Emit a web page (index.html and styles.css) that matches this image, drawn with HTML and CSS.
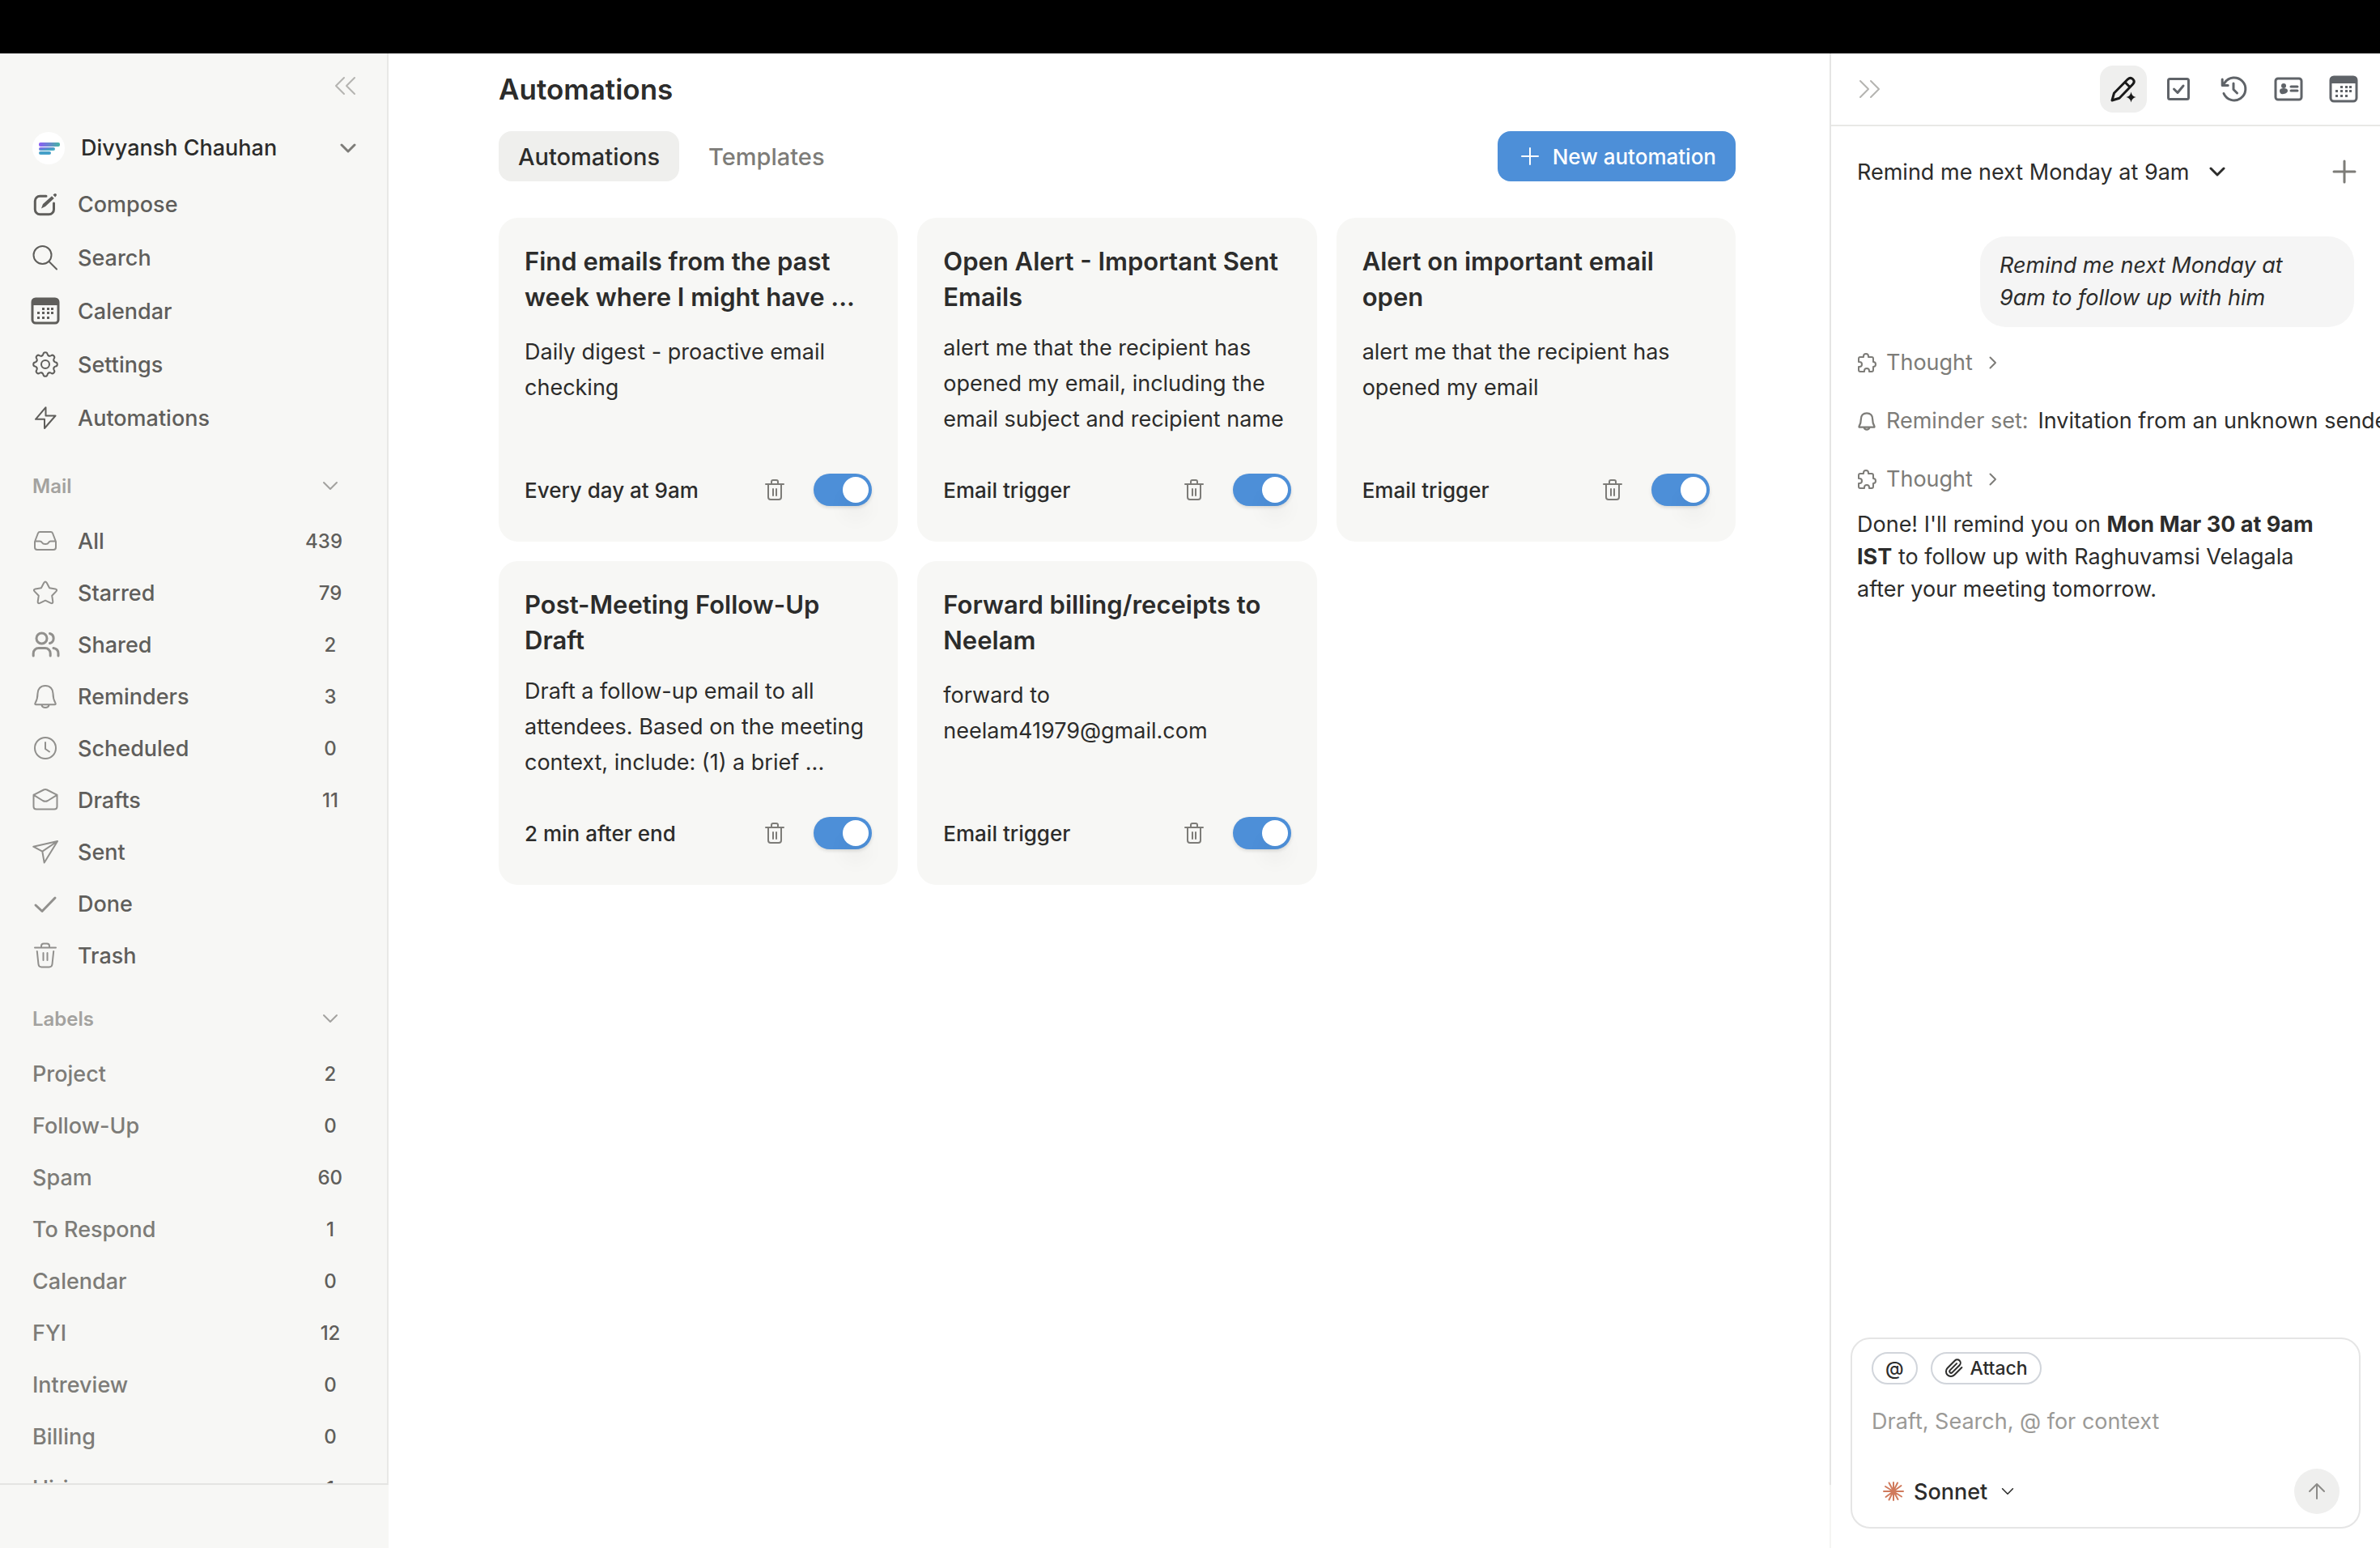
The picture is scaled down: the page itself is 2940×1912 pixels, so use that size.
FILE: index.html
```html
<!DOCTYPE html>
<html lang="en">
<head>
    <meta charset="UTF-8">
    <meta name="viewport" content="width=device-width, initial-scale=1">
    <title>Automations</title>
    <link rel="stylesheet" href="styles.css">
</head>
<body>

<!-- shared icons -->
<svg class="sprite" aria-hidden="true">
    <symbol id="i-calendar" viewBox="0 0 36 36">
        <rect x="2" y="3" width="32" height="30" rx="4" fill="none" stroke="currentColor" stroke-width="3"/>
        <path d="M2 11V6q0-4 4-4h24q4 0 4 4v5z" fill="currentColor"/>
        <g fill="currentColor">
            <path d="M14 14h3v3h-3zM20 14h3v3h-3zM25 14h3v3h-3zM8 19h3v3H8zM14 19h3v3h-3zM20 19h3v3h-3zM25 19h3v3h-3zM8 25h3v3H8zM14 25h3v3h-3zM20 25h3v3h-3z"/>
        </g>
    </symbol>
    <symbol id="i-bell" viewBox="0 0 32 32">
        <path d="M16 3c-6 0-9.500 4-9.500 9.500 0 6-1 8.500-3 12q-.8 1.800 1 1.800h23q1.800 0 1-1.800c-2-3.500-3-6-3-12C25.500 7 22 3 16 3zM11.500 27c1 4 8 4 9 0"/>
    </symbol>
    <symbol id="i-trash" viewBox="0 0 24 26">
        <path d="M1 6h22M8 6V3q0-2 2-2h4q2 0 2 2v3M4 6v16q0 3 3 3h10q3 0 3-3V6M10 12v8M14 12v8"/>
    </symbol>
    <symbol id="i-down" viewBox="0 0 20 12">
        <path d="M2 2l8 8 8-8"/>
    </symbol>
    <symbol id="i-puzzle" viewBox="0 0 24 24">
        <path d="M2 8V7q0-2 2-2h4V4a3 3 0 0 1 6 0v1h4q2 0 2 2v4a3 3 0 0 1 0 6v4q0 2-2 2h-3v-1a3 3 0 0 0-6 0v1H4q-2 0-2-2v-4h1a3 3 0 0 0 0-6H2z"/>
    </symbol>
    <symbol id="i-right" viewBox="0 0 10 16">
        <path d="M1.500 1.500L8 8l-6.500 6.500"/>
    </symbol>
</svg>

<div class="topbar"></div>
<div class="app">

    <aside class="sidebar">
        <div class="sidebar-body">
            <div class="collapse-row">
                <button class="icon-btn" aria-label="Collapse sidebar">
                    <svg class="line light" width="28" height="24" viewBox="0 0 28 24"><path d="M13 2L3 12l10 10M26 2L16 12l10 10"/></svg>
                </button>
            </div>
            <button class="account">
                <svg class="avatar" viewBox="0 0 40 40">
                    <defs>
                        <linearGradient id="brand" x1="0" y1="0" x2="1" y2="1">
                            <stop offset="0" stop-color="#8b5cf6"/>
                            <stop offset=".6" stop-color="#4a9fc4"/>
                            <stop offset="1" stop-color="#45b5c4"/>
                        </linearGradient>
                        <linearGradient id="brandTop" x1="0" y1="0" x2="1" y2="0">
                            <stop offset="0" stop-color="#8b5cf6"/>
                            <stop offset="1" stop-color="#45b5a4"/>
                        </linearGradient>
                    </defs>
                    <circle cx="20" cy="20" r="20" fill="#fff"/>
                    <rect x="8" y="13" width="26" height="5" rx="2" fill="url(#brandTop)"/>
                    <rect x="8" y="19" width="20" height="4" rx="2" fill="url(#brand)"/>
                    <rect x="8" y="24" width="15" height="4" rx="2" fill="#459fc8"/>
                </svg>
                <span class="account-name">Divyansh Chauhan</span>
                <svg class="line" width="20" height="12"><use href="#i-down"/></svg>
            </button>

            <nav class="nav">
                <a href="#"><svg class="ico" viewBox="0 0 32 32"><path class="thick" d="M17 6.200H9.300a6 6 0 0 0-6 6v10.500a6 6 0 0 0 6 6h11.200a6 6 0 0 0 6-6V15"/><path class="solid" d="M11 21.500l2-5.500L24 6.200l2.800 2.800L16 19zM25.500 4.800l1.700-1.500q1.200-.8 2.200.2t.2 2.200L28.200 7.500z"/></svg>Compose</a>
                <a href="#"><svg class="ico" viewBox="0 0 32 32"><circle cx="12.500" cy="13" r="11"/><path d="M20.500 21l9.500 9.500"/></svg>Search</a>
                <a href="#"><svg class="ico-lg"><use href="#i-calendar"/></svg>Calendar</a>
                <a href="#"><svg class="ico" viewBox="0 0 32 32">
                    <g transform="translate(16 16)">
                        <path id="cog" d="M-4.300-10.500C-3.100-11-2.700-11.600-2.600-12.600-2.400-14.200-1.400-14.800 0-14.800S2.400-14.200 2.600-12.600C2.700-11.600 3.100-11 4.300-10.500"/>
                        <use href="#cog" transform="rotate(45)"/><use href="#cog" transform="rotate(90)"/>
                        <use href="#cog" transform="rotate(135)"/><use href="#cog" transform="rotate(180)"/>
                        <use href="#cog" transform="rotate(225)"/><use href="#cog" transform="rotate(270)"/>
                        <use href="#cog" transform="rotate(315)"/>
                        <circle r="5"/>
                    </g></svg>Settings</a>
                <a href="#"><svg class="ico" viewBox="0 0 32 32"><path d="M16.500 3.200L4 17.800h11L15 29l13.500-15.500h-12z"/></svg>Automations</a>
            </nav>

            <button class="group">Mail <svg class="line" width="20" height="12"><use href="#i-down"/></svg></button>
            <nav class="list mail">
                <a href="#"><svg class="ico" viewBox="0 0 32 32"><path d="M3 17L7 6.500Q7.600 5 9.300 5h13.400q1.700 0 2.300 1.500L29 17v7q0 3-3 3H6q-3 0-3-3zM3.500 16.500H9q2 0 3 1.700T16 20t4-1.800 3-1.700h5.500"/></svg>All <span class="count">439</span></a>
                <a href="#"><svg class="ico" viewBox="0 0 32 32"><path d="M14.300 3.800q1.700-2.400 3.400 0l3.400 6.500 7.300 1.100q2.900.6 1 3l-5.200 5.300 1.100 7.300q.2 2.900-2.600 1.900L16 25.700l-6.700 3.200q-2.800 1-2.600-1.900l1.100-7.300-5.200-5.300q-1.900-2.400 1-3l7.300-1.100z"/></svg>Starred <span class="count">79</span></a>
                <a href="#"><svg class="ico" viewBox="0 0 32 32"><g class="thick"><circle cx="11.500" cy="8.500" r="6.500"/><path d="M1.200 30v-3a6.500 6.500 0 0 1 6.500-6.500h8a6.500 6.500 0 0 1 6.500 6.500v3M21.500 2.500a6.200 6.200 0 0 1 0 12M26 20.500q6 1 6 6.500v3"/></g></svg>Shared <span class="count">2</span></a>
                <a href="#"><svg class="ico"><use href="#i-bell"/></svg>Reminders <span class="count">3</span></a>
                <a href="#"><svg class="ico" viewBox="0 0 32 32"><circle cx="16" cy="16" r="13"/><path d="M16 9v8l5 3.500"/></svg>Scheduled <span class="count">0</span></a>
                <a href="#"><svg class="ico" viewBox="0 0 32 32"><path d="M1.500 9.800L14 3.500q2-1 4 0l12.500 6.300V24q0 3.500-3.500 3.500H5Q1.500 27.500 1.500 24zM1.500 9.800L13 17q3 1.500 6 0l11.500-7.200"/></svg>Drafts <span class="count">11</span></a>
                <a href="#"><svg class="ico" viewBox="0 0 32 32"><path d="M31 3L1.200 9.700l11.100 5.900 2.400 13.900zL12.300 15.600"/></svg>Sent</a>
                <a href="#"><svg class="ico" viewBox="0 0 32 32"><path class="thick" d="M4 18l8 7.500L28 9"/></svg>Done</a>
                <a href="#"><svg class="ico" viewBox="0 0 32 32"><path d="M3 6.500h26M11 6.500v-2q0-3 3-3h4q3 0 3 3v2M5.800 11l1.700 16q.4 3.500 3.800 3.500h9.400q3.400 0 3.800-3.500l1.700-16M13.500 13v9M18.500 13v9"/></svg>Trash</a>
            </nav>

            <button class="group">Labels <svg class="line" width="20" height="12"><use href="#i-down"/></svg></button>
            <nav class="list labels">
                <a href="#">Project <span class="count">2</span></a>
                <a href="#">Follow-Up <span class="count">0</span></a>
                <a href="#">Spam <span class="count">60</span></a>
                <a href="#">To Respond <span class="count">1</span></a>
                <a href="#">Calendar <span class="count">0</span></a>
                <a href="#">FYI <span class="count">12</span></a>
                <a href="#">Intreview <span class="count">0</span></a>
                <a href="#">Billing <span class="count">0</span></a>
                <a href="#">Hiring <span class="count">1</span></a>
            </nav>
        </div>
        <div class="sidebar-foot"></div>
    </aside>

    <main class="main">
        <h1>Automations</h1>
        <div class="toolbar">
            <button class="tab active">Automations</button>
            <button class="tab">Templates</button>
            <button class="new-btn">
                <svg class="line" width="24" height="24" viewBox="0 0 24 24"><path d="M12 2v20M2 12h20"/></svg>
                New automation
            </button>
        </div>

        <div class="cards">
            <article class="card">
                <h2>Find emails from the past week where I might have ...</h2>
                <p>Daily digest - proactive email checking</p>
                <div class="card-foot">
                    <span>Every day at 9am</span>
                    <button class="icon-btn" aria-label="Delete"><svg class="line" width="24" height="26"><use href="#i-trash"/></svg></button>
                    <input type="checkbox" class="switch" aria-label="Enabled" checked>
                </div>
            </article>
            <article class="card">
                <h2>Open Alert - Important Sent Emails</h2>
                <p class="long">alert me that the recipient has opened my email, including the email subject and recipient name</p>
                <div class="card-foot">
                    <span>Email trigger</span>
                    <button class="icon-btn" aria-label="Delete"><svg class="line" width="24" height="26"><use href="#i-trash"/></svg></button>
                    <input type="checkbox" class="switch" aria-label="Enabled" checked>
                </div>
            </article>
            <article class="card">
                <h2>Alert on important email open</h2>
                <p>alert me that the recipient has opened my email</p>
                <div class="card-foot">
                    <span>Email trigger</span>
                    <button class="icon-btn" aria-label="Delete"><svg class="line" width="24" height="26"><use href="#i-trash"/></svg></button>
                    <input type="checkbox" class="switch" aria-label="Enabled" checked>
                </div>
            </article>
            <article class="card">
                <h2>Post-Meeting Follow-Up Draft</h2>
                <p class="long">Draft a follow-up email to all attendees. Based on the meeting context, include: (1) a brief ...</p>
                <div class="card-foot">
                    <span>2 min after end</span>
                    <button class="icon-btn" aria-label="Delete"><svg class="line" width="24" height="26"><use href="#i-trash"/></svg></button>
                    <input type="checkbox" class="switch" aria-label="Enabled" checked>
                </div>
            </article>
            <article class="card">
                <h2>Forward billing/receipts to Neelam</h2>
                <p>forward to neelam41979@gmail.com</p>
                <div class="card-foot">
                    <span>Email trigger</span>
                    <button class="icon-btn" aria-label="Delete"><svg class="line" width="24" height="26"><use href="#i-trash"/></svg></button>
                    <input type="checkbox" class="switch" aria-label="Enabled" checked>
                </div>
            </article>
        </div>
    </main>

    <aside class="panel">
        <header class="panel-head">
            <button class="icon-btn" aria-label="Close panel">
                <svg class="line light" width="28" height="24" viewBox="0 0 28 24"><path d="M2 2l10 10L2 22M15 2l10 10-10 10"/></svg>
            </button>
            <div class="panel-tools">
                <button class="tool active" aria-label="Assistant"><svg viewBox="0 0 32 32"><path d="M2 30l2.500-9L21.500 3.800q3.200-3 6.200 0t0 6.200L11 27.200zM18 7.500l6.200 6.200"/><path class="solid" d="M25.500 19.500q1 5.500 6 6.500-5 1-6 6.500-1-5.500-6-6.500 5-1 6-6.500z"/></svg></button>
                <button class="tool" aria-label="Tasks"><svg viewBox="0 0 32 32"><rect x="3.500" y="3.500" width="25" height="25" rx="2"/><path d="M10.500 16l4.500 4.500 7-8.500"/></svg></button>
                <button class="tool" aria-label="History"><svg viewBox="0 0 32 32"><path d="M4 21.500A14 14 0 1 0 5.200 8.200L2.500 11M2.200 4v7.500h7M16 9v7.500l4.500 4.500"/></svg></button>
                <button class="tool" aria-label="Contact"><svg viewBox="0 0 32 32"><rect x="0" y="3" width="32" height="26" rx="3"/><circle class="solid" cx="10" cy="12" r="3"/><path class="solid" d="M5 18q0-3 5-3t5 3-5 4-5-4z"/><path d="M19 13h8M19 18h8"/></svg></button>
                <button class="tool" aria-label="Calendar"><svg class="cal"><use href="#i-calendar"/></svg></button>
            </div>
        </header>

        <div class="thread-head">
            <label class="pick">
                <select aria-label="Conversation"><option>Remind me next Monday at 9am</option></select>
                <svg class="line" width="20" height="12"><use href="#i-down"/></svg>
            </label>
            <button class="icon-btn" aria-label="New conversation">
                <svg class="line" width="28" height="28" viewBox="0 0 28 28"><path d="M14 1v26M1 14h26"/></svg>
            </button>
        </div>

        <div class="thread">
            <p class="bubble">Remind me next Monday at 9am to follow up with him</p>
            <button class="step"><svg class="line" width="24" height="24"><use href="#i-puzzle"/></svg>Thought <svg class="line chev" width="10" height="16"><use href="#i-right"/></svg></button>
            <p class="step"><svg class="line bell" width="24" height="24"><use href="#i-bell"/></svg>Reminder set: <span>Invitation from an unknown sender</span></p>
            <button class="step"><svg class="line" width="24" height="24"><use href="#i-puzzle"/></svg>Thought <svg class="line chev" width="10" height="16"><use href="#i-right"/></svg></button>
            <p class="reply">Done! I'll remind you on <b>Mon Mar 30 at 9am IST</b> to follow up with Raghuvamsi Velagala after your meeting tomorrow.</p>
        </div>

        <form class="composer">
            <div class="chips">
                <button type="button" class="chip">@</button>
                <button type="button" class="chip">
                    <svg class="line" width="24" height="24" viewBox="0 0 24 24"><path d="M21.400 11l-9.200 9.200a6 6 0 0 1-8.500-8.500l9.200-9.200a4 4 0 0 1 5.700 5.700l-9.200 9.200a2 2 0 0 1-2.800-2.800l8.500-8.500"/></svg>
                    Attach
                </button>
            </div>
            <textarea rows="1" placeholder="Draft, Search, @ for context" aria-label="Message"></textarea>
            <div class="composer-foot">
                <label class="pick model">
                    <svg width="26" height="26" viewBox="-13 -13 26 26" stroke="#d07a5c" stroke-width="2" stroke-linecap="round"><path d="M0-11V11M-12 0H12M-5.500-10.500L5.500 10M5-10.500L-5.500 10.500M-10-6L10 6.500M9.500-7L-9.500 7"/></svg>
                    <select aria-label="Model"><option>Sonnet</option></select>
                    <svg class="line" width="16" height="10"><use href="#i-down"/></svg>
                </label>
                <button type="button" class="send" aria-label="Send">
                    <svg class="line" width="20" height="20" viewBox="0 0 20 20"><path d="M10 19V1M1 10l9-9 9 9"/></svg>
                </button>
            </div>
        </form>
    </aside>
</div>

</body>
</html>
```
FILE: styles.css
```css
* {
    box-sizing: border-box;
}
body {
    margin: 0;
    height: 100vh;
    display: flex;
    flex-direction: column;
    overflow: hidden;
    font-family: Inter, "Liberation Sans", sans-serif;
    font-size: 27px;
    color: #2c2c2b;
    background: #fff;
}
h1, h2, p {
    margin: 0;
}
a {
    color: inherit;
    text-decoration: none;
}
button, select, textarea {
    font: inherit;
    color: inherit;
    background: none;
    border: 0;
    padding: 0;
    margin: 0;
}
svg {
    flex: none;
    overflow: visible;
}
.sprite {
    display: none;
}
.line {
    fill: none;
    stroke: currentColor;
    stroke-width: 2;
    stroke-linecap: round;
    stroke-linejoin: round;
}
.light {
    color: #b5b4b1;
}
.solid {
    fill: currentColor;
    stroke: none;
}
.icon-btn {
    display: flex;
}

.topbar {
    height: 66px;
    flex: none;
    background: #000;
}
.app {
    flex: 1;
    min-height: 0;
    display: flex;
}

/* sidebar */
.sidebar {
    width: 480px;
    flex: none;
    display: flex;
    flex-direction: column;
    background: #f7f7f5;
    font-weight: 500;
    color: #5f5e5b;
}
.sidebar-body {
    flex: 1;
    min-height: 0;
    overflow: hidden;
    border-right: 2px solid #e8e8e6;
    border-bottom: 2px solid #e4e4e2;
}
.sidebar-foot {
    height: 78px;
    flex: none;
}
.collapse-row {
    height: 80px;
    padding: 0 38px;
    display: flex;
    align-items: center;
    justify-content: flex-end;
}
.account {
    width: 100%;
    height: 73px;
    padding: 0 38px 0 40px;
    display: flex;
    align-items: center;
    gap: 20px;
    color: #7d7c78;
}
.account .line {
    stroke-width: 3;
}
.avatar {
    width: 40px;
    height: 40px;
}
.account-name {
    flex: 1;
    text-align: left;
    color: #2c2c2b;
}
.nav {
    padding-bottom: 5px;
}
.nav a, .list a {
    height: 64px;
    padding: 0 55px 0 40px;
    display: flex;
    align-items: center;
    gap: 24px;
}
.nav a {
    height: 66px;
}
.ico {
    width: 32px;
    height: 32px;
    fill: none;
    stroke: currentColor;
    stroke-width: 2;
    stroke-linecap: round;
    stroke-linejoin: round;
}
.thick {
    stroke-width: 3;
}
.ico-lg {
    width: 36px;
    height: 36px;
    margin: 0 -2px;
}
.mail .ico {
    color: #91908d;
}
.labels {
    color: #7d7c78;
}
.count {
    min-width: 30px;
    margin-left: auto;
    text-align: center;
    font-size: 24px;
    color: #5f5e5b;
}
.group {
    width: 100%;
    height: 64px;
    margin: 14px 0 4px;
    padding: 0 60px 0 40px;
    display: flex;
    align-items: center;
    justify-content: space-between;
    font-size: 24px;
    font-weight: 600;
    color: #a3a29f;
}

/* main */
.main {
    flex: 1;
    min-width: 0;
    padding: 22px 116px 0 136px;
}
h1 {
    font-size: 35px;
    line-height: 44px;
    font-weight: 600;
}
.toolbar {
    display: flex;
    align-items: center;
    gap: 12px;
    margin: 30px 0 45px;
}
.tab {
    height: 62px;
    padding: 0 24px;
    border-radius: 16px;
    font-size: 29px;
    font-weight: 500;
    color: #7d7c78;
}
.tab.active {
    background: #efefed;
    color: #2c2c2b;
}
.new-btn {
    margin-left: auto;
    height: 62px;
    padding: 0 24px 0 28px;
    display: flex;
    align-items: center;
    gap: 16px;
    border-radius: 16px;
    background: #4d8fd8;
    color: #fff;
    font-size: 26px;
    font-weight: 500;
}
.cards {
    display: grid;
    grid-template-columns: repeat(3, 1fr);
    gap: 24px;
}
.card {
    min-height: 400px;
    padding: 32px;
    display: flex;
    flex-direction: column;
    border-radius: 24px;
    background: #f7f7f5;
}
h2 {
    font-size: 31px;
    line-height: 44px;
    font-weight: 600;
}
.card p {
    margin-top: 24px;
    line-height: 44px;
}
.card .long {
    margin-top: 19px;
}
.card-foot {
    height: 64px;
    margin-top: auto;
    display: flex;
    align-items: center;
    gap: 36px;
    font-size: 26px;
    font-weight: 500;
}
.card-foot span {
    flex: 1;
}
.card-foot .icon-btn {
    color: #7d7c78;
}
.switch {
    appearance: none;
    width: 72px;
    height: 40px;
    margin: 0;
    padding: 4px;
    display: flex;
    border-radius: 20px;
    background: #d4d4d2;
    box-shadow: 0 2px 4px rgba(0, 0, 0, .12);
}
.switch::before {
    content: "";
    width: 32px;
    height: 32px;
    border-radius: 50%;
    background: #fff;
    box-shadow: 0 20px 24px rgba(0, 0, 0, .04);
}
.switch:checked {
    background: #4d8fd8;
    justify-content: flex-end;
}

/* assistant panel */
.panel {
    width: 680px;
    flex: none;
    display: flex;
    flex-direction: column;
    padding-left: 2px;
    overflow: hidden;
    background: linear-gradient(#e5e5e4, #e5e5e4) left top / 2px calc(100% - 78px) no-repeat,
                linear-gradient(#f5f5f3, #f5f5f3) left top / 2px 100% no-repeat;
}
.panel-head {
    height: 90px;
    padding: 0 16px 0 34px;
    display: flex;
    align-items: center;
    justify-content: space-between;
    border-bottom: 2px solid #e8e8e6;
}
.panel-tools {
    display: flex;
    gap: 10px;
}
.tool {
    width: 58px;
    height: 58px;
    display: grid;
    place-items: center;
    border-radius: 16px;
    color: #5f6368;
}
.tool.active {
    background: #efefee;
    color: #1a1a1a;
}
.tool svg {
    width: 32px;
    height: 32px;
    fill: none;
    stroke: currentColor;
    stroke-width: 3;
    stroke-linecap: round;
    stroke-linejoin: round;
}
.tool .solid {
    fill: currentColor;
    stroke: none;
}
.tool .cal {
    width: 36px;
    height: 36px;
    stroke: none;
}
.thread-head {
    height: 112px;
    padding: 0 30px 0 32px;
    display: flex;
    align-items: center;
    justify-content: space-between;
}
.thread-head .icon-btn {
    color: #7d7c78;
}
.thread-head .icon-btn .line {
    stroke-width: 3;
}
.pick {
    display: flex;
    align-items: center;
    gap: 24px;
}
.pick select {
    appearance: none;
}
.pick .line {
    stroke-width: 3;
}
.thread {
    flex: 1;
    min-height: 0;
    padding: 24px 32px 0;
    display: flex;
    flex-direction: column;
    align-items: flex-start;
    line-height: 40px;
}
.bubble {
    width: 462px;
    align-self: flex-end;
    padding: 16px 24px;
    border-radius: 32px;
    background: #f5f5f5;
    font-style: italic;
}
.step {
    height: 40px;
    margin: 24px 0 8px;
    display: flex;
    align-items: center;
    gap: 12px;
    white-space: nowrap;
    color: #7d7c78;
}
.step + .step {
    margin-top: 24px;
}
.step span {
    color: #2c2c2b;
}
.chev {
    margin-left: 8px;
}
.bell {
    stroke-width: 3;
}
.reply {
    margin-top: 8px;
    padding-right: 24px;
}
.reply b {
    font-weight: 700;
}
.composer {
    margin: 0 24px;
    margin-bottom: 24px;
    padding: 16px 24px;
    border: 2px solid #e5e5e5;
    border-radius: 24px;
}
.chips {
    display: flex;
    gap: 16px;
}
.chip {
    height: 40px;
    padding: 0 15px;
    display: flex;
    align-items: center;
    gap: 8px;
    border: 2px solid #d1d5db;
    border-radius: 20px;
    font-size: 23px;
    font-weight: 500;
}
textarea {
    display: block;
    width: 100%;
    height: 40px;
    margin: 26px 0 38px;
    line-height: 40px;
    resize: none;
    overflow: hidden;
}
textarea::placeholder {
    color: #9b9a97;
}
.composer-foot {
    display: flex;
    align-items: center;
    justify-content: space-between;
}
.model {
    padding-left: 14px;
    gap: 12px;
    font-weight: 500;
}
.model .line {
    stroke-width: 2;
    margin-left: 4px;
}
.send {
    width: 56px;
    height: 56px;
    display: grid;
    place-items: center;
    border-radius: 50%;
    background: #efefee;
    color: #8c8b88;
}
```
